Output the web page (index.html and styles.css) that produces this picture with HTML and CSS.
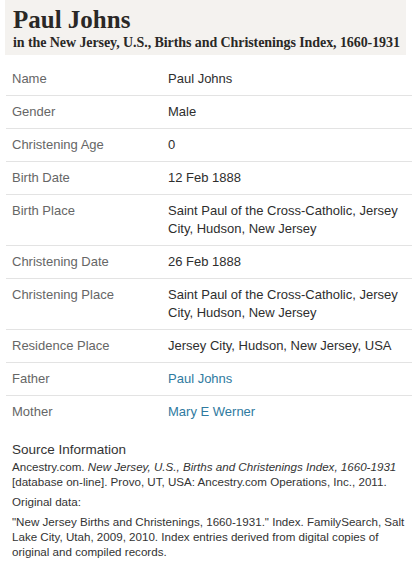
FILE: index.html
```html
<!DOCTYPE html>
<html lang="en">
<head>
<meta charset="utf-8">
<title>Paul Johns</title>
<link rel="stylesheet" href="styles.css">
</head>
<body>
<header class="rec-header">
  <h1 class="rec-title">Paul Johns</h1>
  <p class="rec-sub">in the New Jersey, U.S., Births and Christenings Index, 1660-1931</p>
</header>
<table class="facts">
  <tbody>
    <tr><th>Name</th><td>Paul Johns</td></tr>
    <tr><th>Gender</th><td>Male</td></tr>
    <tr><th>Christening Age</th><td>0</td></tr>
    <tr><th>Birth Date</th><td>12 Feb 1888</td></tr>
    <tr><th>Birth Place</th><td>Saint Paul of the Cross-Catholic, Jersey City, Hudson, New Jersey</td></tr>
    <tr><th>Christening Date</th><td>26 Feb 1888</td></tr>
    <tr><th>Christening Place</th><td>Saint Paul of the Cross-Catholic, Jersey City, Hudson, New Jersey</td></tr>
    <tr><th>Residence Place</th><td>Jersey City, Hudson, New Jersey, USA</td></tr>
    <tr><th>Father</th><td><a class="link" href="#">Paul Johns</a></td></tr>
    <tr class="last"><th>Mother</th><td><a class="link" href="#">Mary E Werner</a></td></tr>
  </tbody>
</table>
<section class="source">
  <h2 class="source-title">Source Information</h2>
  <p class="cite">Ancestry.com. <em>New Jersey, U.S., Births and Christenings Index, 1660-1931</em> [database on-line]. Provo, UT, USA: Ancestry.com Operations, Inc., 2011.</p>
  <p class="cite">Original data:</p>
  <p class="cite">"New Jersey Births and Christenings, 1660-1931." Index. FamilySearch, Salt Lake City, Utah, 2009, 2010. Index entries derived from digital copies of original and compiled records.</p>
</section>
</body>
</html>
```

FILE: styles.css
```css
html, body {
  margin: 0;
  padding: 0;
  background: #ffffff;
}
body {
  font-family: "Liberation Sans", Arial, sans-serif;
  color: #333333;
}
.rec-header {
  margin: 0 9px 0 5px;
  padding: 6px 4px 3px 8px;
  background: #f4f2ef;
}
.rec-title {
  margin: 0;
  font-family: "Liberation Serif", "Times New Roman", serif;
  font-weight: bold;
  font-size: 25px;
  line-height: 28px;
  color: #2a2826;
}
.rec-sub {
  margin: 0;
  font-family: "Liberation Serif", "Times New Roman", serif;
  font-weight: bold;
  font-size: 14px;
  line-height: 18px;
  letter-spacing: -0.08px;
  white-space: nowrap;
  color: #2a2826;
}
.facts {
  margin: 8px 3px 0 6px;
  width: 406px;
  border-collapse: collapse;
  font-size: 13px;
  line-height: 18px;
}
.facts th,
.facts td {
  padding: 7px 0 7px 0;
  text-align: left;
  vertical-align: top;
  border-bottom: 1px solid #e3e3e3;
}
.facts th {
  width: 156px;
  padding-left: 6px;
  font-weight: normal;
  color: #666666;
}
.facts td {
  color: #2e2e2e;
  padding-right: 6px;
}
.facts tr.last th,
.facts tr.last td {
  border-bottom: none;
}
.link {
  color: #2f7aa0;
  text-decoration: none;
}
.source {
  padding: 13px 4px 0 12px;
}
.source-title {
  margin: 0;
  font-size: 13.5px;
  line-height: 18px;
  font-weight: normal;
  color: #333333;
}
.cite {
  margin: 0 0 5px;
  font-size: 11.6px;
  line-height: 15px;
  color: #333333;
}
```
